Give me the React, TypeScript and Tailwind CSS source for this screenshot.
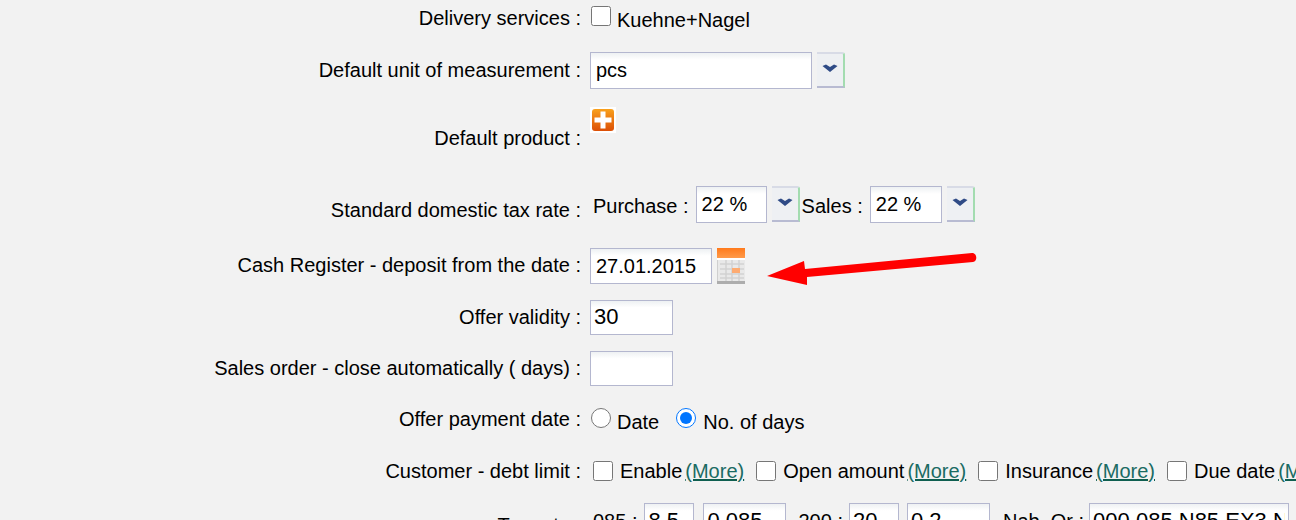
import type { ReactNode } from 'react'

const inputBase = "border border-[#b4b7cf] bg-gradient-to-b from-[#eef1f3] from-0% to-white to-20% text-black outline-none"
const inputClass = `${inputBase} px-[5px] text-[20px]`
const inputLarge = `${inputBase} px-[3px] text-[22px]`

function Row({ label, height, top, children, labelClass = "" }: { label: string; height: string; top: string; children: ReactNode; labelClass?: string }) {
    return (
        <div className={`flex shrink-0 items-center ${height} ${top}`}>
            <label className={`w-[581px] shrink-0 text-right whitespace-pre ${labelClass}`}>{label}</label>
            <div className="ml-[9px] flex items-center whitespace-nowrap">{children}</div>
        </div>
    )
}

function DropButton({ className = "" }: { className?: string }) {
    return (
        <div className={`flex h-[36px] w-[28px] items-center justify-center rounded-tr-[3px] border-t-2 border-r-2 border-b-2 border-t-[#d8dbe6] border-r-[#a3dcb0] border-b-[#b8bbd2] bg-[#eef0f3] ${className}`}>
            <svg width="16" height="10" viewBox="0 0 16 10" className="mb-[3px]">
                <path d="M0.500 2 L4 0.500 L8 3 L12 0.500 L15.500 2 L8 8 Z" fill="#2f4b86" />
            </svg>
        </div>
    )
}

function PlusIcon() {
    return (
        <div className="size-[26px] bg-white p-[1px]">
            <svg width="24" height="24" viewBox="0 0 24 24">
                <defs>
                    <linearGradient id="plusBg" x1="0" y1="0" x2="0" y2="1">
                        <stop offset="0" stopColor="#f9a11c" />
                        <stop offset="1" stopColor="#dc4f06" />
                    </linearGradient>
                </defs>
                <rect x="1" y="1" width="22" height="22" rx="3" fill="url(#plusBg)" />
                <path d="M9.500 3.500h5v6h6v5h-6v6h-5v-6h-6v-5h6z" fill="#fff" />
            </svg>
        </div>
    )
}

function CalendarIcon() {
    return (
        <svg width="28" height="36" viewBox="0 0 28 36" className="ml-[5px]">
            <defs>
                <linearGradient id="calTop" x1="0" y1="0" x2="0" y2="1">
                    <stop offset="0" stopColor="#ff7a1c" />
                    <stop offset="1" stopColor="#ff9a4a" />
                </linearGradient>
            </defs>
            <rect x="0" y="0" width="28" height="36" fill="#e9e9e9" />
            <rect x="0" y="0" width="28" height="10" fill="url(#calTop)" />
            <rect x="0" y="10" width="28" height="2" fill="#ffffff" />
            <path d="M3 16h24M3 21h24M3 26h24M3 30h24M9 12v21M15 12v21M22 12v21" stroke="#d2d2d2" strokeWidth="1.500" />
            <rect x="15" y="20" width="8" height="5" fill="#fdab72" />
            <rect x="0" y="12" width="1" height="24" fill="#cfcfcf" />
            <rect x="0" y="33" width="28" height="3" fill="#adadad" />
        </svg>
    )
}

function More({ className = "ml-[3px]" }: { className?: string }) {
    return <a className={`${className} text-[#1a6b63] underline decoration-[#0f5f50] decoration-2`}>(More)</a>
}

function Check({ className = "" }: { className?: string }) {
    return <input type="checkbox" className={`m-0 size-[20px] ${className}`} />
}

export default function App() {
    return (
        <div className="relative flex h-[520px] w-[1296px] flex-col overflow-hidden bg-[#f2f2f2] font-['Liberation_Sans',Arial,sans-serif] text-[20px] text-black">
            <Row label="Delivery services :" height="h-[36px]" top="">
                <Check className="-mt-[4px] ml-[1px]" />
                <span className="ml-[6px] mt-[4px]">Kuehne+Nagel</span>
            </Row>

            <Row label="Default unit of measurement :" height="h-[36px]" top="mt-[16px]">
                <input defaultValue="pcs" className={`h-[37px] w-[222px] ${inputClass}`} />
                <DropButton className="ml-[5px]" />
            </Row>

            <Row label="Default product :" height="h-[76px]" top="mt-[12px]">
                <div className="-mt-[36px]"><PlusIcon /></div>
            </Row>

            <Row label="Standard domestic tax rate :" height="h-[36px]" top="mt-[10px]" labelClass="mt-[12px]">
                <span className="ml-[3px] mt-[3px]">Purchase :</span>
                <input defaultValue="22 %" className={`ml-[7px] h-[37px] w-[71px] ${inputClass}`} />
                <DropButton className="ml-[5px]" />
                <span className="ml-[2px] mt-[3px]">Sales :</span>
                <input defaultValue="22 %" className={`ml-[7px] h-[37px] w-[72px] ${inputClass}`} />
                <DropButton className="ml-[5px]" />
            </Row>

            <Row label="Cash Register - deposit from the date :" height="h-[36px]" top="mt-[26px]" labelClass="-mt-[2px]">
                <input defaultValue="27.01.2015" className={`h-[36px] w-[122px] ${inputClass}`} />
                <CalendarIcon />
            </Row>

            <Row label="Offer validity :" height="h-[36px]" top="mt-[15px]">
                <input defaultValue="30" className={`h-[35px] w-[83px] ${inputLarge}`} />
            </Row>

            <Row label="Sales order - close automatically ( days) :" height="h-[36px]" top="mt-[15px]">
                <input className={`h-[35px] w-[83px] ${inputClass}`} />
            </Row>

            <Row label="Offer payment date :" height="h-[36px]" top="mt-[15px]">
                <input type="radio" name="pay" className="-mt-[2px] ml-[1px] size-[20px]" />
                <span className="ml-[6px] mt-[6px]">Date</span>
                <input type="radio" name="pay" defaultChecked className="-mt-[2px] ml-[17px] size-[20px]" />
                <span className="ml-[7px] mt-[6px]">No. of days</span>
            </Row>

            <Row label="Customer - debt limit :" height="h-[36px]" top="mt-[16px]">
                <Check className="ml-[3px]" />
                <span className="ml-[7px]">Enable</span>
                <More />
                <Check className="ml-[12px]" />
                <span className="ml-[7px]">Open amount</span>
                <More className="ml-[3px]" />
                <Check className="ml-[12px]" />
                <span className="ml-[7px]">Insurance</span>
                <More className="ml-[3px]" />
                <Check className="ml-[12px]" />
                <span className="ml-[7px]">Due date</span>
                <More className="ml-[3px]" />
            </Row>

            <Row label="Toner to :" height="h-[36px]" top="mt-[14px]" labelClass="mt-[8px]">
                <span className="ml-[3px]">085 :</span>
                <input defaultValue="8.5" className={`ml-[7px] h-[36px] w-[50px] ${inputLarge}`} />
                <input defaultValue="0.085" className={`ml-[9px] h-[36px] w-[83px] ${inputLarge}`} />
                <span className="ml-[12px]">200 :</span>
                <input defaultValue="20" className={`ml-[6px] h-[36px] w-[50px] ${inputLarge}`} />
                <input defaultValue="0.2" className={`ml-[8px] h-[36px] w-[83px] ${inputLarge}`} />
                <span className="ml-[13px]">Nab. Or :</span>
                <input defaultValue="000 085 N85 EX3 N" className={`ml-[5px] h-[36px] w-[200px] ${inputLarge}`} />
            </Row>

            {/* annotation arrow */}
            <svg width="220" height="40" viewBox="0 0 220 40" className="absolute top-[250px] left-[766px]">
                <path d="M1 26 L38 11 L39 19 L206 3 C211 2.500 212 11.500 207 12 L41 27 L41 35 Z" fill="#ff0000" />
            </svg>
        </div>
    )
}
